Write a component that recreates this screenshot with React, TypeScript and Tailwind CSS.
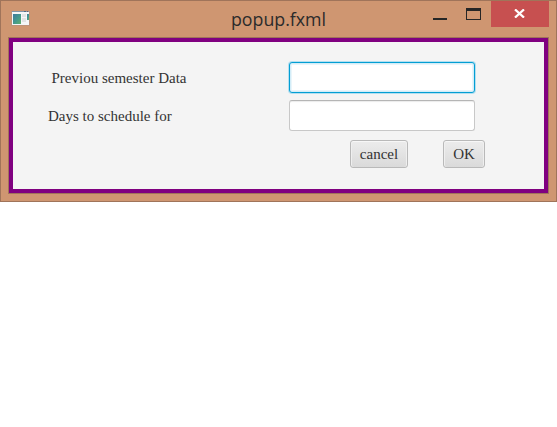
function AppIcon() {
  return (
    <svg width="19" height="16" viewBox="0 0 19 16" shapeRendering="crispEdges">
      <defs>
        <linearGradient id="pane" x1="0" y1="0" x2="1" y2="1">
          <stop offset="0" stopColor="#3f79a0" />
          <stop offset="0.55" stopColor="#459a8c" />
          <stop offset="1" stopColor="#63b06c" />
        </linearGradient>
      </defs>
      <rect x="0" y="0" width="19" height="15" fill="#b09080" opacity="0.55" />
      <rect x="1" y="1" width="17" height="13" fill="#f5f6f7" />
      <rect x="1" y="0" width="17" height="1" fill="#8496a8" />
      <rect x="13" y="0" width="2" height="1" fill="#4d6a85" />
      <rect x="16" y="0" width="1" height="1" fill="#7d5c62" />
      <rect x="2" y="3" width="8" height="10" fill="url(#pane)" />
      <rect x="11" y="3" width="4" height="3" fill="#e2e3e4" />
      <rect x="11" y="7" width="4" height="4" fill="#e2e3e4" />
      <rect x="16" y="3" width="2" height="6" fill="url(#pane)" />
    </svg>
  );
}

function TitleBar() {
  return (
    <header className="flex h-[36px] items-start">
      <div className="w-[220px] pt-[10px] pl-[10px]">
        <AppIcon />
      </div>
      <h1 className="w-[115px] pt-[5px] text-center font-['Open_Sans',sans-serif] text-[17.8px] leading-[26px] whitespace-nowrap text-[#2b2b2b]">
        popup.fxml
      </h1>
      <div className="flex flex-1 items-start justify-end pr-[7px]">
        <button aria-label="Minimize" className="mt-[17px] mr-[19px] h-[2px] w-[14px] bg-[#262626]" />
        <button aria-label="Maximize" className="mt-[7px] mr-[10px] h-[12px] w-[15px] border border-t-[3px] border-[#262626]" />
        <button aria-label="Close" className="flex h-[26px] w-[58px] items-start justify-center bg-[#c75050] pt-[8px]">
          <svg width="11" height="9" viewBox="0 0 11 9" className="mr-[1px]">
            <path d="M1 0.4 L10 8.6 M10 0.4 L1 8.6" stroke="#fff" strokeWidth="2.2" fill="none" />
          </svg>
        </button>
      </div>
    </header>
  );
}

const label = "w-[241px] text-[15px] leading-[20px] text-[#333]";
const action =
  "h-[28px] rounded-[3px] border border-[#b9b9b9] bg-linear-to-b from-[#ececec] to-[#dadada] text-[15px] leading-[26px] text-[#333] shadow-[inset_0_1px_0_#f7f7f7,inset_1px_0_0_#efefef,inset_-1px_0_0_#efefef]";

export default function App() {
  return (
    <div className="h-[427px] w-[557px] bg-white">
      <div className="h-[202px] w-[557px] border border-[#a0745a] bg-[#cf9671]">
        <TitleBar />
        <div className="ml-[7px] h-[157px] w-[541px] border border-[#a0745a]">
          <main className="h-[155px] border-4 border-[#800080] bg-[#f4f4f4] pt-[20px] pl-[35px] font-['Liberation_Serif',serif]">
            <div className="flex h-[31px] items-center">
              <label htmlFor="data" className={label + " pl-[3.5px]"}>
                Previou semester Data
              </label>
              <input
                id="data"
                className="h-[31px] w-[186px] rounded-[3px] border border-[#039ed3] bg-white shadow-[0_0_0_1px_#b4dff0,inset_0_0_0_1px_#d3edf8,inset_0_0_0_2px_#eaf5fa] outline-none"
              />
            </div>
            <div className="mt-[7px] flex h-[31px] items-center">
              <label htmlFor="days" className={label}>
                Days to schedule for
              </label>
              <input
                id="days"
                className="h-[31px] w-[186px] rounded-[3px] border border-[#c8c8c8] border-t-[#b5b5b5] bg-white shadow-[inset_0_2px_1px_-1px_#ececec] outline-none"
              />
            </div>
            <div className="mt-[9px] flex pl-[302px]">
              <button className={action + " w-[58px]"}>cancel</button>
              <button className={action + " ml-[35px] w-[42px]"}>OK</button>
            </div>
          </main>
        </div>
      </div>
    </div>
  );
}
